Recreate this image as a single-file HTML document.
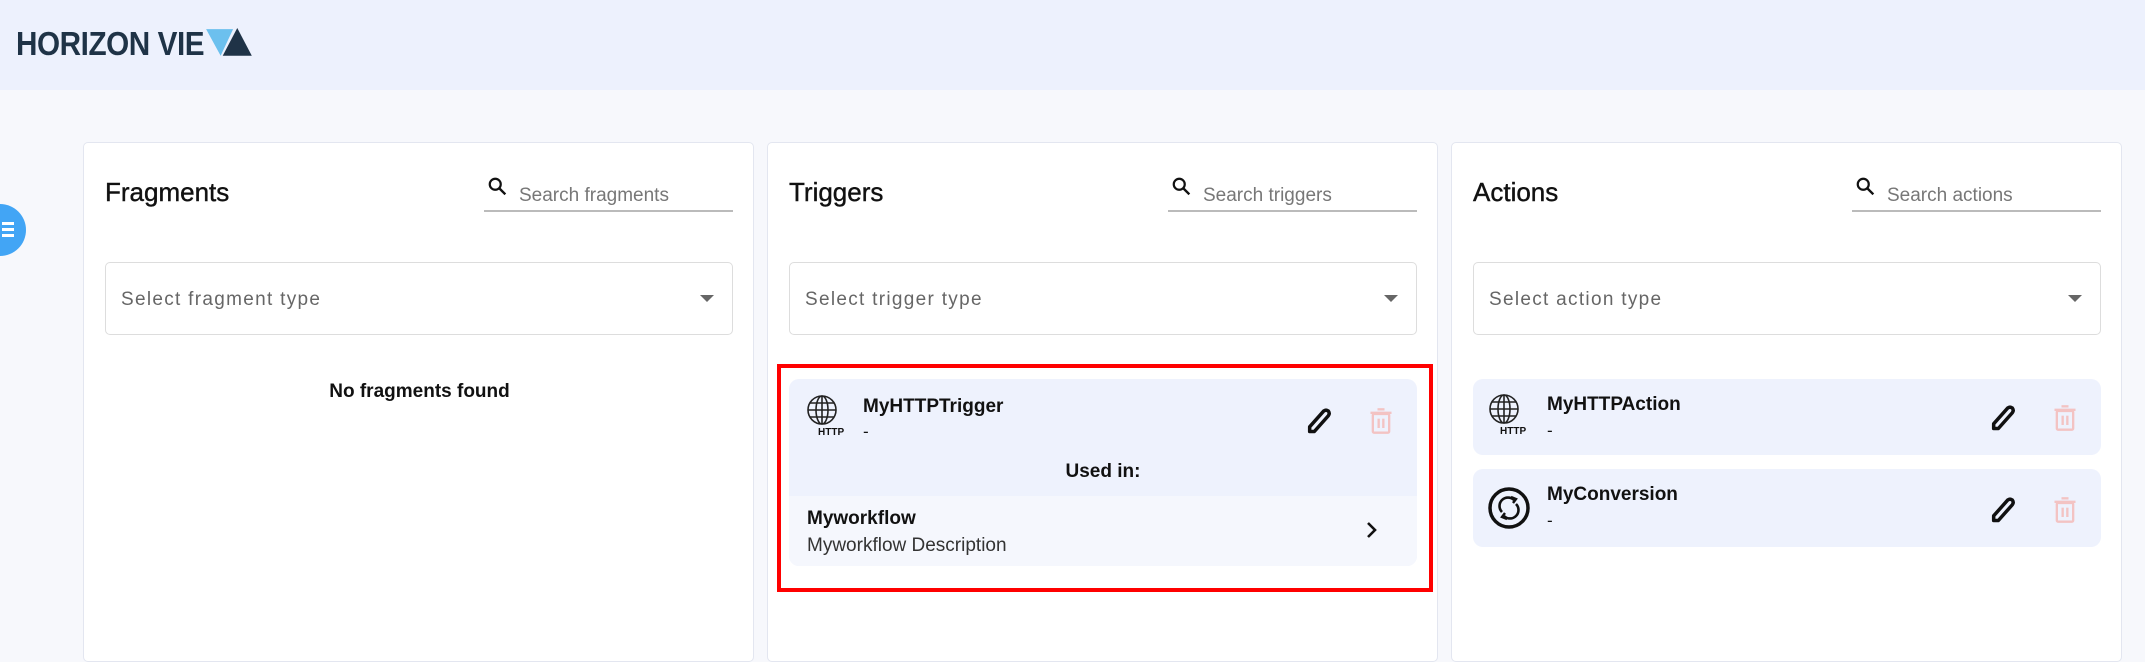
<!DOCTYPE html>
<html><head><meta charset="utf-8"><style>
*{box-sizing:border-box;margin:0;padding:0}
body{width:2145px;height:626px;overflow:hidden;background:#f7f8fc;font-family:"Liberation Sans",sans-serif;position:relative;color:#111}
.hdr{position:absolute;left:0;top:0;width:2145px;height:90px;background:#edf1fd}
.logo{position:absolute;left:16px;top:25px;font-size:33px;font-weight:bold;color:#1f3347;letter-spacing:-0.5px;transform:scaleX(0.9);transform-origin:left;white-space:nowrap}
.fab{position:absolute;left:-26px;top:204px;width:52px;height:52px;border-radius:50%;background:#42a5f5}
.fab i{position:absolute;left:28px;width:12px;height:3px;background:#fff}
.panel{position:absolute;top:142px;width:671px;height:520px;background:#fff;border:1px solid #e3e6f0;border-radius:5px}
.title{position:absolute;left:21px;top:34px;font-size:26px;color:#111;-webkit-text-stroke:0.4px #111}
.search{position:absolute;left:400px;top:30px;width:249px;height:39px;border-bottom:2px solid #bbb}
.search span{position:absolute;left:35px;top:12px;font-size:19px;color:#777}
.search svg{position:absolute;left:3px;top:3px}
.sel{position:absolute;left:21px;top:119px;width:628px;height:73px;border:1px solid #ddd;border-radius:5px}
.sel span{position:absolute;left:15px;top:26px;font-size:19px;color:#666;letter-spacing:1.3px}
.sel b{position:absolute;right:18px;top:32px;border-left:7px solid transparent;border-right:7px solid transparent;border-top:7px solid #666}
.card{position:absolute;left:21px;width:628px;background:#eef2fd;border-radius:10px}
.nm{position:absolute;left:74px;font-size:19px;font-weight:bold}
.dash{position:absolute;left:74px;font-size:17px}
.pen{position:absolute;left:516px}
.trash{position:absolute;left:578px}
</style></head><body>
<div class="hdr"><div class="logo">HORIZON VIE<svg width="74" height="30" viewBox="0 0 62 26" style="vertical-align:-3px;margin-left:1px"><polygon points="0,1 26,1 14,24" fill="#6cc0ee"/><polygon points="30,0 44,24 16,24" fill="#1f3347"/></svg></div></div>
<div class="fab"><i style="top:18px"></i><i style="top:24px"></i><i style="top:30px"></i></div>

<svg width="0" height="0" style="position:absolute"><defs>
<symbol id="mag" viewBox="0 0 24 24"><circle cx="9" cy="9" r="6" fill="none" stroke="#111" stroke-width="2.4"/><line x1="13.5" y1="13.5" x2="20" y2="20" stroke="#111" stroke-width="2.6"/></symbol>
<symbol id="globe" viewBox="0 0 32 32"><g fill="none" stroke="#222" stroke-width="1.6"><circle cx="16" cy="16" r="14"/><ellipse cx="16" cy="16" rx="6" ry="14"/><line x1="16" y1="2" x2="16" y2="30"/><line x1="2" y1="16" x2="30" y2="16"/><line x1="4" y1="9" x2="28" y2="9"/><line x1="4" y1="23" x2="28" y2="23"/></g></symbol>
<symbol id="pen" viewBox="0 0 24 24"><path d="M4 21 L4 17 L16 3.5 Q18 2 20 3.5 Q21.5 5.5 20 7.5 L8 21 Z" fill="none" stroke="#111" stroke-width="3" stroke-linejoin="round"/></symbol>
<symbol id="trash" viewBox="0 0 24 24"><g fill="none" stroke="#f3c3c3" stroke-width="2"><rect x="5" y="6" width="14" height="16" rx="1"/><line x1="3" y1="5" x2="21" y2="5"/><line x1="9" y1="2" x2="15" y2="2"/><line x1="10" y1="10" x2="10" y2="18"/><line x1="14" y1="10" x2="14" y2="18"/></g></symbol>
</defs></svg>

<div class="panel" style="left:83px">
<div class="title">Fragments</div>
<div class="search"><svg width="22" height="22"><use href="#mag"/></svg><span>Search fragments</span></div>
<div class="sel"><span>Select fragment type</span><b></b></div>
<div style="position:absolute;left:0;width:671px;top:238px;text-align:center;font-size:19px;font-weight:bold">No fragments found</div>
</div>

<div class="panel" style="left:767px">
<div class="title">Triggers</div>
<div class="search"><svg width="22" height="22"><use href="#mag"/></svg><span>Search triggers</span></div>
<div class="sel"><span>Select trigger type</span><b></b></div>
<div style="position:absolute;left:9px;top:221px;width:656px;height:228px;border:4px solid #f00"></div>
<div class="card" style="top:236px;height:187px;overflow:hidden">
<svg style="position:absolute;left:17px;top:15px" width="32" height="32"><use href="#globe"/></svg>
<div style="position:absolute;left:29px;top:48px;font-size:10px;font-weight:bold">HTTP</div>
<div class="nm" style="top:17px">MyHTTPTrigger</div>
<div class="dash" style="top:43px">-</div>
<svg class="pen" style="top:28px" width="28" height="28"><use href="#pen"/></svg>
<svg class="trash" style="top:28px" width="28" height="28"><use href="#trash"/></svg>
<div style="position:absolute;left:0;width:628px;top:82px;text-align:center;font-size:19px;font-weight:bold">Used in:</div>
<div style="position:absolute;left:0;top:117px;width:628px;height:70px;background:#f5f7fd">
<div style="position:absolute;left:18px;top:12px;font-size:19px;font-weight:bold">Myworkflow</div>
<div style="position:absolute;left:18px;top:39px;font-size:19px;color:#333">Myworkflow Description</div>
<svg style="position:absolute;left:576px;top:24px" width="14" height="20" viewBox="0 0 14 20"><path d="M3 3 L10 10 L3 17" fill="none" stroke="#111" stroke-width="2.6"/></svg>
</div></div>
</div>

<div class="panel" style="left:1451px">
<div class="title">Actions</div>
<div class="search"><svg width="22" height="22"><use href="#mag"/></svg><span>Search actions</span></div>
<div class="sel"><span>Select action type</span><b></b></div>
<div class="card" style="top:236px;height:76px">
<svg style="position:absolute;left:15px;top:14px" width="32" height="32"><use href="#globe"/></svg>
<div style="position:absolute;left:27px;top:47px;font-size:10px;font-weight:bold">HTTP</div>
<div class="nm" style="top:15px">MyHTTPAction</div>
<div class="dash" style="top:42px">-</div>
<svg class="pen" style="top:25px" width="28" height="28"><use href="#pen"/></svg>
<svg class="trash" style="top:25px" width="28" height="28"><use href="#trash"/></svg>
</div>
<div class="card" style="top:326px;height:78px">
<svg style="position:absolute;left:14px;top:17px" width="44" height="44" viewBox="0 0 44 44"><circle cx="22" cy="22" r="19" fill="none" stroke="#111" stroke-width="3.5"/><path d="M15 26 A8 8 0 0 1 27 14 M29 18 A8 8 0 0 1 17 30" fill="none" stroke="#111" stroke-width="2.6"/><path d="M24 11 L29 13 L26 17 M20 33 L15 31 L18 27" fill="none" stroke="#111" stroke-width="2.4"/></svg>
<div class="nm" style="top:15px">MyConversion</div>
<div class="dash" style="top:42px">-</div>
<svg class="pen" style="top:27px" width="28" height="28"><use href="#pen"/></svg>
<svg class="trash" style="top:27px" width="28" height="28"><use href="#trash"/></svg>
</div>
</div>
</body></html>
